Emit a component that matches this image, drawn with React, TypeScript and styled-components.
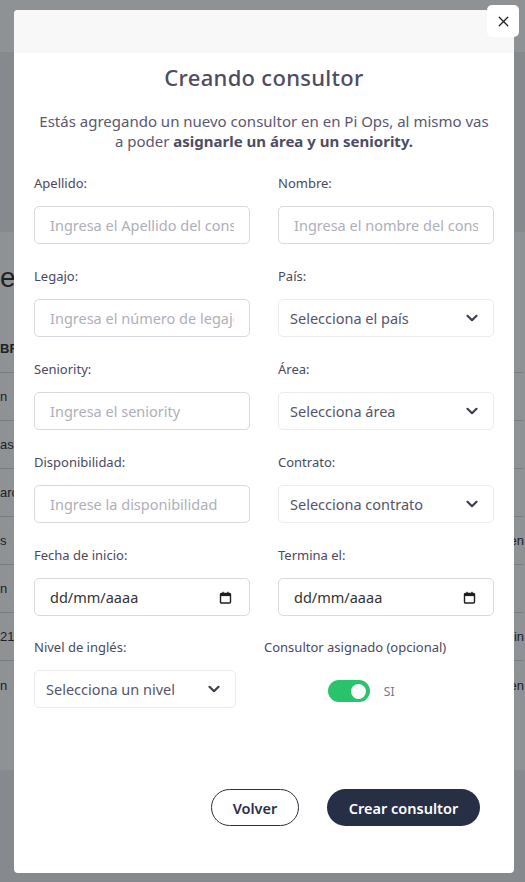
import React from 'react';
import styled, { createGlobalStyle } from 'styled-components';
import { X } from 'lucide-react';

const GlobalStyle = createGlobalStyle`
	* {
		box-sizing: border-box;
	}
	html,
	body {
		margin: 0;
		padding: 0;
	}
	body {
		width: 525px;
		height: 882px;
		overflow: hidden;
		background: #eeeff1;
		font-family: 'Noto Sans', 'Open Sans', sans-serif;
	}
`;

const bgRows = [
	{ left: 'n', right: '' },
	{ left: 'as', right: '' },
	{ left: 'arc', right: '' },
	{ left: 's', right: 'en' },
	{ left: 'n', right: '' },
	{ left: '212', right: 'in' },
	{ left: 'n', right: 'en' },
];

const leftFields = [
	{ label: 'Apellido:', placeholder: 'Ingresa el Apellido del consultor' },
	{ label: 'Nombre:', placeholder: 'Ingresa el nombre del consultor' },
	{ label: 'Legajo:', placeholder: 'Ingresa el número de legajo' },
	{ label: 'País:', select: 'Selecciona el país' },
	{ label: 'Seniority:', placeholder: 'Ingresa el seniority' },
	{ label: 'Área:', select: 'Selecciona área' },
	{ label: 'Disponibilidad:', placeholder: 'Ingrese la disponibilidad' },
	{ label: 'Contrato:', select: 'Selecciona contrato' },
	{ label: 'Fecha de inicio:', date: true },
	{ label: 'Termina el:', date: true },
];

const Chevron = () => (
	<svg width="12" height="8" viewBox="0 0 12 8" fill="none">
		<path
			d="M1.5 1.8 6 6.2l4.5-4.4"
			stroke="#3f3e52"
			strokeWidth="2.2"
			strokeLinecap="round"
			strokeLinejoin="round"
		/>
	</svg>
);

const CalendarIcon = () => (
	<svg width="13" height="13" viewBox="0 0 13 13" fill="none">
		<rect x="1.5" y="2.5" width="10" height="9.5" rx="1" stroke="#1f1f1f" strokeWidth="1.4" />
		<rect x="1.5" y="2.5" width="10" height="2.6" fill="#1f1f1f" />
		<rect x="3.4" y="0.8" width="1.3" height="2" fill="#1f1f1f" />
		<rect x="8.3" y="0.8" width="1.3" height="2" fill="#1f1f1f" />
	</svg>
);

const App = () => {
	return (
		<>
			<GlobalStyle />
			<Page>
				<TopBar />
				<BgCard>
					<BgTitle>es</BgTitle>
					<BgHeadRow>BR</BgHeadRow>
					{bgRows.map((row, i) => (
						<BgRow key={i} last={i === bgRows.length - 1}>
							<span>{row.left}</span>
							<span>{row.right}</span>
						</BgRow>
					))}
				</BgCard>
			</Page>

			<Overlay>
				<Modal>
					<CloseButton aria-label="Cerrar">
						<X size={17} strokeWidth={1.8} color="#1d1d1d" />
					</CloseButton>
					<ModalHeader />
					<ModalBody>
						<Title>Creando consultor</Title>
						<Intro>
							Estás agregando un nuevo consultor en en Pi Ops, al mismo vas
							<br />a poder <strong>asignarle un área y un seniority.</strong>
						</Intro>

						<FormGrid>
							{leftFields.map((field) => (
								<Field key={field.label}>
									<Label>{field.label}</Label>
									{field.placeholder && (
										<TextInput placeholder={field.placeholder} />
									)}
									{field.select && (
										<SelectBox>
											<span>{field.select}</span>
											<Chevron />
										</SelectBox>
									)}
									{field.date && (
										<DateBox>
											<span>dd/mm/aaaa</span>
											<CalendarIcon />
										</DateBox>
									)}
								</Field>
							))}
						</FormGrid>

						<LastRow>
							<Field>
								<Label>Nivel de inglés:</Label>
								<SelectBox>
									<span>Selecciona un nivel</span>
									<Chevron />
								</SelectBox>
							</Field>
							<ToggleBlock>
								<Label>Consultor asignado (opcional)</Label>
								<ToggleRow>
									<Track on>
										<Knob />
									</Track>
									<ToggleText>SI</ToggleText>
								</ToggleRow>
							</ToggleBlock>
						</LastRow>

						<Actions>
							<GhostButton>Volver</GhostButton>
							<PrimaryButton>Crear consultor</PrimaryButton>
						</Actions>
					</ModalBody>
				</Modal>
			</Overlay>
		</>
	);
};

export default App;

const Page = styled.div`
	display: flex;
	flex-direction: column;
	width: 525px;
	height: 882px;
	font-family: 'Liberation Sans', sans-serif;
	color: #2b2b2b;
`;

const TopBar = styled.div`
	height: 52px;
	background: #ffffff;
`;

const BgCard = styled.div`
	margin-top: 180px;
	height: 538px;
	background: #ffffff;
	padding: 32px 1px 0 0;
`;

const BgTitle = styled.div`
	height: 28px;
	line-height: 28px;
	font-size: 28px;
	margin-bottom: 33px;
`;

const BgHeadRow = styled.div`
	height: 48px;
	line-height: 48px;
	font-size: 13px;
	font-weight: bold;
	border-bottom: 1px solid #d8d8d8;
`;

const BgRow = styled.div<{ last: boolean }>`
	display: flex;
	justify-content: space-between;
	align-items: center;
	height: 48px;
	font-size: 13px;
	border-bottom: ${(p) => (p.last ? 'none' : '1px solid #d8d8d8')};
`;

const Overlay = styled.div`
	position: fixed;
	inset: 0;
	padding: 10px 11px 0 14px;
	background: rgba(17, 24, 28, 0.47);
`;

const Modal = styled.div`
	position: relative;
	display: flex;
	flex-direction: column;
	width: 500px;
	height: 863px;
	background: #ffffff;
	border-radius: 4px;
	font-family: 'Noto Sans', 'Open Sans', sans-serif;
`;

const CloseButton = styled.button`
	position: absolute;
	top: -5px;
	right: -5px;
	display: flex;
	align-items: center;
	justify-content: center;
	width: 32px;
	height: 32px;
	padding: 0;
	border: none;
	border-radius: 5px;
	background: #ffffff;
	cursor: pointer;
`;

const ModalHeader = styled.div`
	height: 43px;
	background: #f8f8f8;
	border-radius: 4px 4px 0 0;
`;

const ModalBody = styled.div`
	display: flex;
	flex-direction: column;
	padding: 10px 20px 0;
`;

const Title = styled.h2`
	margin: 0;
	height: 28px;
	line-height: 28px;
	text-align: center;
	font-size: 22px;
	font-weight: 500;
	letter-spacing: 0.3px;
	color: #4e4c63;
`;

const Intro = styled.p`
	margin: 20px 0 0;
	line-height: 20px;
	text-align: center;
	font-size: 15px;
	color: #5a586e;

	strong {
		font-weight: 700;
		color: #4e4c63;
	}
`;

const FormGrid = styled.div`
	display: grid;
	grid-template-columns: 216px 216px;
	column-gap: 28px;
	row-gap: 24px;
	margin-top: 24px;
`;

const Field = styled.div`
	display: flex;
	flex-direction: column;
	gap: 15px;
`;

const Label = styled.label`
	height: 16px;
	line-height: 16px;
	font-size: 13px;
	color: #4a4960;
	white-space: nowrap;
`;

const TextInput = styled.input`
	width: 100%;
	height: 38px;
	padding: 0 15px;
	border: 1px solid #d9d9df;
	border-radius: 5px;
	font-family: inherit;
	font-size: 14.5px;
	color: #333;
	outline: none;

	&::placeholder {
		color: #afafb9;
	}
`;

const SelectBox = styled.div`
	display: flex;
	align-items: center;
	justify-content: space-between;
	height: 38px;
	padding: 0 15px 0 11px;
	border: 1px solid #ececf0;
	border-radius: 5px;
	font-size: 14.5px;
	color: #55546a;
`;

const DateBox = styled.div`
	display: flex;
	align-items: center;
	justify-content: space-between;
	height: 38px;
	padding: 0 17px 0 15px;
	border: 1px solid #d9d9df;
	border-radius: 5px;
	font-size: 14.5px;
	color: #333333;
`;

const LastRow = styled.div`
	display: grid;
	grid-template-columns: 202px auto;
	column-gap: 28px;
	margin-top: 23px;
	align-items: start;
`;

const ToggleBlock = styled.div`
	display: flex;
	flex-direction: column;
	align-items: center;
	gap: 25px;
	width: fit-content;
`;

const ToggleRow = styled.div`
	display: flex;
	align-items: center;
	gap: 14px;
	padding-left: 12px;
`;

const Track = styled.div<{ on: boolean }>`
	display: flex;
	align-items: center;
	justify-content: ${(p) => (p.on ? 'flex-end' : 'flex-start')};
	width: 42px;
	height: 22px;
	padding: 0 4px;
	border-radius: 11px;
	background: ${(p) => (p.on ? '#28c36b' : '#d4d4d8')};
`;

const Knob = styled.span`
	width: 15px;
	height: 15px;
	border-radius: 50%;
	background: #ffffff;
`;

const ToggleText = styled.span`
	font-size: 12px;
	color: #77768a;
`;

const Actions = styled.div`
	display: flex;
	justify-content: flex-end;
	gap: 28px;
	margin-top: 81px;
	padding-right: 14px;
`;

const GhostButton = styled.button`
	width: 88px;
	height: 37px;
	border: 1px solid #2a3146;
	border-radius: 19px;
	background: #ffffff;
	font-family: inherit;
	font-size: 14.5px;
	font-weight: 600;
	color: #2a3146;
	cursor: pointer;
`;

const PrimaryButton = styled.button`
	width: 153px;
	height: 37px;
	border: none;
	border-radius: 19px;
	background: #262f45;
	font-family: inherit;
	font-size: 14.5px;
	font-weight: 600;
	color: #ffffff;
	cursor: pointer;
`;
